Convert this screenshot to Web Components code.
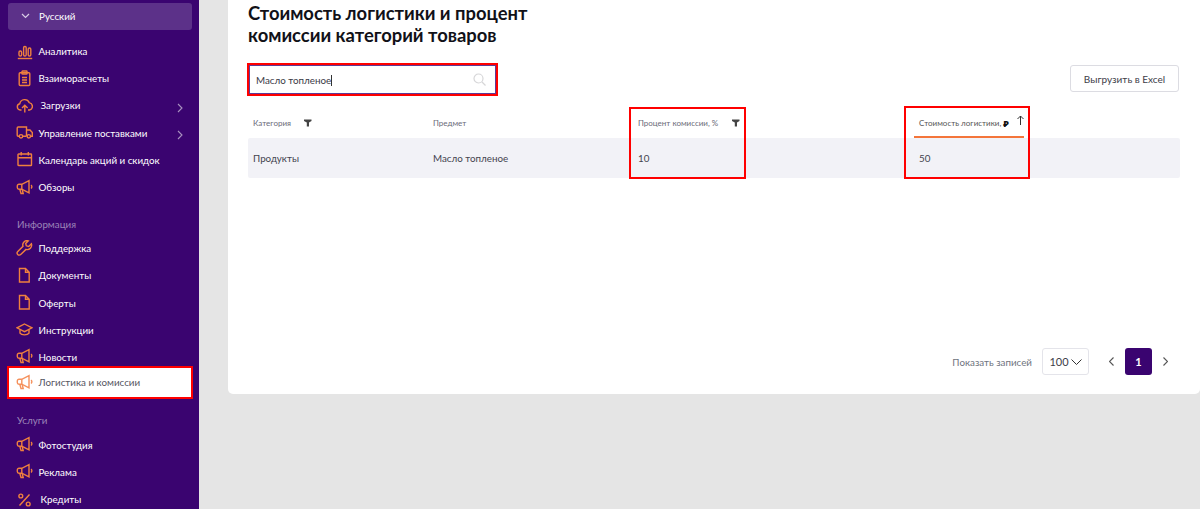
<!DOCTYPE html>
<html lang="ru">
<head>
<meta charset="utf-8">
<title>Логистика и комиссии</title>
<style>
  html, body { margin: 0; height: 100%; overflow: hidden; background: #e5e5e5; }
  body { font-family: Lato, "Open Sans", "Noto Sans", sans-serif; }
  app-shell { height: 509px; }
</style>
</head>
<body>
<app-shell>
  <side-bar slot="side">
    <lang-select>Русский</lang-select>
    <nav-item icon="chart">Аналитика</nav-item>
    <nav-item icon="clipboard">Взаиморасчеты</nav-item>
    <nav-item icon="cloud" arrow shift="2">Загрузки</nav-item>
    <nav-item icon="truck" arrow>Управление поставками</nav-item>
    <nav-item icon="calendar">Календарь акций и скидок</nav-item>
    <nav-item icon="horn">Обзоры</nav-item>
    <nav-label>Информация</nav-label>
    <nav-item icon="wrench">Поддержка</nav-item>
    <nav-item icon="doc">Документы</nav-item>
    <nav-item icon="doc">Оферты</nav-item>
    <nav-item icon="cap">Инструкции</nav-item>
    <nav-item icon="horn">Новости</nav-item>
    <nav-item icon="horn" active>Логистика и комиссии</nav-item>
    <nav-label>Услуги</nav-label>
    <nav-item icon="horn">Фотостудия</nav-item>
    <nav-item icon="horn">Реклама</nav-item>
    <nav-item icon="percent" shift="2">Кредиты</nav-item>
  </side-bar>
  <main-card slot="main"></main-card>
</app-shell>

<script>
const ICONS = {
  chart: '<rect x="3" y="8" width="2.600" height="5" rx="1.200"/><rect x="7.600" y="3.500" width="2.600" height="9.500" rx="1.200"/><rect x="12.200" y="5" width="2.600" height="8" rx="1.200"/><path d="M1.800 15.500h14.400"/>',
  clipboard: '<rect x="3.200" y="2.800" width="10.600" height="12.700" rx="1"/><rect x="6" y="1" width="5" height="3" rx=".6"/><path d="M6 7.500h5M6 10h5M6 12.500h5"/>',
  cloud: '<path d="M5.500 13H4.200A3.200 3.200 0 0 1 3.800 6.700 5 5 0 0 1 13.300 5.600 3.800 3.800 0 0 1 13.600 13H12"/><path d="M8.800 15.500V8.500M6 11l2.800-2.800L11.600 11"/>',
  truck: '<path d="M10.500 12.300V3H2.200A1 1 0 0 0 1.200 4V11.300A1 1 0 0 0 2.200 12.300H3"/><path d="M10.500 6H14L16.300 8.500V12.300H14.800M10.500 12.300H7"/><circle cx="5" cy="12.300" r="1.700"/><circle cx="12.800" cy="12.300" r="1.700"/>',
  calendar: '<rect x="2" y="3" width="13.500" height="11.500" rx=".6"/><path d="M2 6.700h13.500M5.200 1v3.500M12.300 1v3.500"/>',
  horn: '<path d="M5.800 5.300H3A1.700 1.700 0 0 0 1.300 7V8.500A1.700 1.700 0 0 0 3 10.200H5.800L13 13.800V1.700Z"/><path d="M3.800 10.300l1.200 4.200H7.200L6.200 10.500M5.800 5.300V10.200M15 6.200a2 2 0 0 1 0 3.300"/>',
  wrench: '<path d="M15.400 3.800L12.700 6.500 10.300 5.800 9.700 3.400 12.300 .8A4.300 4.300 0 0 0 7 6.300L1.800 11.500A2 2 0 0 0 4.700 14.500L10 9.400A4.400 4.400 0 0 0 15.400 3.800Z"/>',
  doc: '<path d="M3.500 1.500H9.500L13.200 5.200V15H3.500ZM9.500 1.500V5.200H13.200"/>',
  cap: '<path d="M8.500 3L16 6.800 8.500 10.600 1 6.800Z"/><path d="M4 8.500V12.200C5.500 14.400 11.500 14.400 13 12.200V8.500"/>',
  percent: '<path d="M13.500 3.500L3.500 14.500"/><circle cx="4.800" cy="5" r="1.900"/><circle cx="12.200" cy="13" r="1.900"/>'
};

class AppShell extends HTMLElement {
  constructor() {
    super();
    this.attachShadow({ mode: 'open' }).innerHTML = `
      <style>
        :host { display: grid; grid-template-columns: 199px 1fr; overflow: hidden; }
        .main { padding-left: 29px; min-width: 0; }
      </style>
      <slot name="side"></slot>
      <div class="main"><slot name="main"></slot></div>`;
  }
}

class SideBar extends HTMLElement {
  constructor() {
    super();
    this.attachShadow({ mode: 'open' }).innerHTML = `
      <style>
        :host {
          display: flex; flex-direction: column; height: 509px; overflow: hidden;
          background: #3a0470; padding: 3px 7px 0 8px; box-sizing: border-box;
        }
        ::slotted(*) { flex: none; }
      </style>
      <slot></slot>`;
  }
}

class LangSelect extends HTMLElement {
  constructor() {
    super();
    this.attachShadow({ mode: 'open' }).innerHTML = `
      <style>
        :host {
          display: flex; align-items: center; height: 26.500px; margin-bottom: 8px;
          background: #5c3189; border-radius: 3px; color: #fff; font-size: 9.800px;
          padding-left: 13px;
        }
        svg { width: 9px; height: 6px; margin-right: 9px; fill: none; stroke: #d9cde6; stroke-width: 1.200; }
      </style>
      <svg viewBox="0 0 9 6"><path d="M1 1l3.500 3.500L8 1"/></svg><slot></slot>`;
  }
}

class NavItem extends HTMLElement {
  constructor() {
    super();
    const icon = ICONS[this.getAttribute('icon')] || '';
    const arrow = this.hasAttribute('arrow')
      ? '<svg class="arrow" viewBox="0 0 6 10"><path d="M1 1l4 4-4 4"/></svg>' : '';
    const shift = Number(this.getAttribute('shift') || 0);
    this.attachShadow({ mode: 'open' }).innerHTML = `
      <style>
        :host {
          display: flex; align-items: center; height: 27.200px; box-sizing: border-box;
          color: #fff; font-size: 9.800px; padding-left: 8px; position: relative; white-space: nowrap;
        }
        :host([active]) {
          height: 33px; width: 186px; margin: -4.900px 0 -1.500px -1px; padding-left: 7px;
          background: #fff; color: #55555f; border: 2px solid #f00; box-sizing: border-box;
        }
        :host([active]) .ico { stroke: #f5915c; }
        .ico { width: 17px; height: 17px; flex: none; margin-right: 5.500px; fill: none; stroke: #f0803e; stroke-width: 1.400; }
        .label { margin-left: ${shift}px; }
        .arrow { position: absolute; left: 169px; top: 11px; width: 6px; height: 10px; fill: none; stroke: #a892bf; stroke-width: 1.100; }
      </style>
      <svg class="ico" viewBox="0 0 17 17">${icon}</svg><span class="label"><slot></slot></span>${arrow}`;
  }
}

class NavLabel extends HTMLElement {
  constructor() {
    super();
    this.attachShadow({ mode: 'open' }).innerHTML = `
      <style>
        :host { display: block; color: #9c85b8; font-size: 9.800px; line-height: 14px; padding: 16px 0 4px 9px; }
      </style>
      <slot></slot>`;
  }
}

class SearchBox extends HTMLElement {
  constructor() {
    super();
    this.attachShadow({ mode: 'open' }).innerHTML = `
      <style>
        :host {
          display: flex; align-items: center; width: 251px; height: 33px; box-sizing: border-box;
          border: 2px solid #f00; background: #fff; color: #3a3a46; font-size: 9.800px; padding: 0 9px 0 7px;
          box-shadow: inset 0 0 0 1px #5f3a96;
        }
        .cursor { display: inline-block; width: 1px; height: 11px; background: #333; vertical-align: -2px; }
        .text { flex: 1; }
        svg { width: 13px; height: 13px; fill: none; stroke: #d6d6d8; stroke-width: 1.200; margin-right: 1px; }
      </style>
      <span class="text">Масло топленое<span class="cursor"></span></span>
      <svg viewBox="0 0 13 13"><circle cx="5.500" cy="5.500" r="4.500"/><path d="M9 9l3.500 3.500"/></svg>`;
  }
}

class DataTable extends HTMLElement {
  constructor() {
    super();
    const filter = '<svg class="filter" viewBox="0 0 8 8"><path d="M0 .5h7.500v1.500L5 3.500V7.500H2.800V3.500L0 2Z"/></svg>';
    this.attachShadow({ mode: 'open' }).innerHTML = `
      <style>
        :host { display: block; position: relative; color: #4a4a58; }
        .grid { display: grid; grid-template-columns: 180px 205px 281px 266px; }
        .head { height: 30px; font-size: 8px; color: #6b6b78; }
        .head > div { display: flex; align-items: center; padding-left: 5px; position: relative; }
        .row { height: 40px; background: #f2f2f7; border-radius: 2px; font-size: 9.800px; color: #44444f; }
        .row > div { display: flex; align-items: center; padding-left: 5px; }
        .filter { width: 8px; height: 8px; fill: #444; }
        .f1 { margin-left: 13px; }
        .f3 { margin-left: 14px; }
        .c4 span { color: #555; }
        .c4 b { color: #111; font-size: 9px; font-weight: 900; margin-left: 2px; }
        .up { width: 7px; height: 10px; fill: none; stroke: #333; stroke-width: 1; margin-left: 8px; margin-top: -6px; }
        .rule { position: absolute; left: 666px; top: 27.500px; width: 110px; height: 2px; background: #f4753a; }
        .mark { position: absolute; border: 2px solid #f00; box-sizing: border-box; }
        .m3 { left: 381px; top: -1px; width: 117px; height: 72px; }
        .m4 { left: 656px; top: -2px; width: 126px; height: 73px; }
      </style>
      <div class="grid head">
        <div>Категория${filter.replace('filter"', 'filter f1"')}</div>
        <div>Предмет</div>
        <div>Процент комиссии, %${filter.replace('filter"', 'filter f3"')}</div>
        <div class="c4"><span>Стоимость логистики,</span><b>₽</b><svg class="up" viewBox="0 0 7 10"><path d="M3.500 10V1M.5 4l3-3 3 3"/></svg></div>
      </div>
      <div class="grid row">
        <div>Продукты</div><div>Масло топленое</div><div>10</div><div>50</div>
      </div>
      <div class="rule"></div>
      <div class="mark m3"></div>
      <div class="mark m4"></div>`;
  }
}

class PagerBar extends HTMLElement {
  constructor() {
    super();
    this.attachShadow({ mode: 'open' }).innerHTML = `
      <style>
        :host { display: flex; align-items: center; justify-content: flex-end; font-size: 9.800px; color: #6f7480; }
        .size {
          display: flex; align-items: center; justify-content: center; gap: 2px;
          width: 47px; height: 27px; box-sizing: border-box; margin-left: 10px;
          border: 1px solid #e4e4ea; border-radius: 3px; color: #3d3d48; font-size: 11px;
        }
        .size svg { width: 11px; height: 6px; fill: none; stroke: #333; stroke-width: 1; }
        .nav { width: 5px; height: 9px; fill: none; stroke: #555; stroke-width: 1.100; }
        .prev { margin-left: 20px; }
        .page {
          width: 27px; height: 27px; margin: 0 11px 0 11px; display: flex; align-items: center; justify-content: center;
          background: #3a0470; border-radius: 3px; color: #fff; font-weight: 700; font-size: 11px;
        }
        .next { margin-right: 12px; }
      </style>
      <span>Показать записей</span>
      <div class="size">100<svg viewBox="0 0 11 6"><path d="M.5.5l5 5 5-5"/></svg></div>
      <svg class="nav prev" viewBox="0 0 5 9"><path d="M4.500.5l-4 4 4 4"/></svg>
      <div class="page">1</div>
      <svg class="nav next" viewBox="0 0 5 9"><path d="M.5.5l4 4-4 4"/></svg>`;
  }
}

class MainCard extends HTMLElement {
  constructor() {
    super();
    this.attachShadow({ mode: 'open' }).innerHTML = `
      <style>
        :host {
          display: flex; flex-direction: column; height: 394px; box-sizing: border-box;
          background: #fff; border-radius: 0 0 5px 5px; padding: 2px 20px 0 20px;
        }
        h1 { margin: 0; font-size: 18.400px; line-height: 22px; font-weight: 700; color: #111118; width: 320px; }
        .tools { display: flex; justify-content: space-between; align-items: flex-start; margin-top: 17px; height: 45px; }
        search-box { margin-left: -1px; }
        .excel {
          display: flex; align-items: center; justify-content: center; width: 109px; height: 27px; margin: 2px 1px 0 0;
          box-sizing: border-box; border: 1px solid #dcdce2; border-radius: 3px; font-size: 10px; color: #3d3d48;
        }
        pager-bar { margin-top: 170px; }
      </style>
      <h1>Стоимость логистики и процент комиссии категорий товаров</h1>
      <div class="tools">
        <search-box></search-box>
        <div class="excel">Выгрузить в Excel</div>
      </div>
      <data-table></data-table>
      <pager-bar></pager-bar>`;
  }
}

customElements.define('search-box', SearchBox);
customElements.define('data-table', DataTable);
customElements.define('pager-bar', PagerBar);
customElements.define('main-card', MainCard);
customElements.define('nav-label', NavLabel);
customElements.define('nav-item', NavItem);
customElements.define('lang-select', LangSelect);
customElements.define('side-bar', SideBar);
customElements.define('app-shell', AppShell);
</script>
</body>
</html>
